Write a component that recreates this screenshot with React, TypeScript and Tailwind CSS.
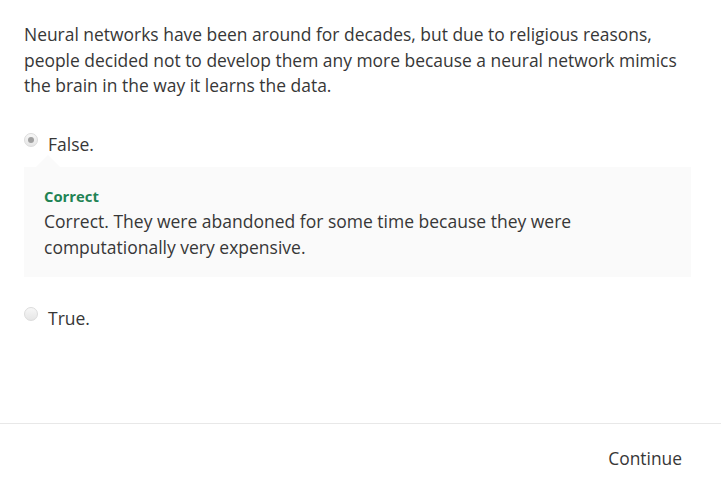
import React from 'react'

function Radio({ checked }: { checked?: boolean }) {
  return (
    <span className="mt-[1px] w-[14px] h-[14px] flex-shrink-0 rounded-full border border-[#dcdcdc] bg-gradient-to-b from-[#f7f7f7] to-[#e6e6e6] flex items-center justify-center">
      {checked && <span className="w-[6px] h-[6px] rounded-full bg-[#a0a0a0]" />}
    </span>
  )
}

export default function App() {
  return (
    <div
      className="w-[721px] h-[482px] bg-white text-[#373737] flex flex-col"
      style={{ fontFamily: '"Open Sans", "Liberation Sans", sans-serif' }}
    >
      <div className="flex-1 pl-6 pr-[30px] pt-[22px]">
        <p className="text-[17.45px] leading-[25.6px]">
          Neural networks have been around for decades, but due to religious reasons, people decided not to
          develop them any more because a neural network mimics the brain in the way it learns the data.
        </p>

        <div className="mt-[33px] flex items-start gap-[10px] text-[17.5px] leading-[24px]">
          <Radio checked />
          <span>False.</span>
        </div>

        <div className="relative mt-[11px] bg-[#fafafa] pl-5 pr-5 pt-[19px] pb-[17px]">
          <span className="absolute left-3 -top-3 w-0 h-0 border-l-[12px] border-r-[12px] border-b-[12px] border-l-transparent border-r-transparent border-b-[#fafafa]" />
          <div className="text-[14.8px] leading-[20px] font-bold text-[#1f8354]">Correct</div>
          <p className="mt-[2px] text-[17.5px] leading-[26px] pr-[60px]">
            Correct. They were abandoned for some time because they were computationally very expensive.
          </p>
        </div>

        <div className="mt-[29px] flex items-start gap-[10px] text-[17.5px] leading-[24px]">
          <Radio />
          <span>True.</span>
        </div>
      </div>

      <div className="h-[59px] border-t border-[#e8e8e8] flex items-start justify-end pt-[22px] pr-[39px]">
        <button className="text-[17.4px] leading-[24px] text-[#373737]">Continue</button>
      </div>
    </div>
  )
}
